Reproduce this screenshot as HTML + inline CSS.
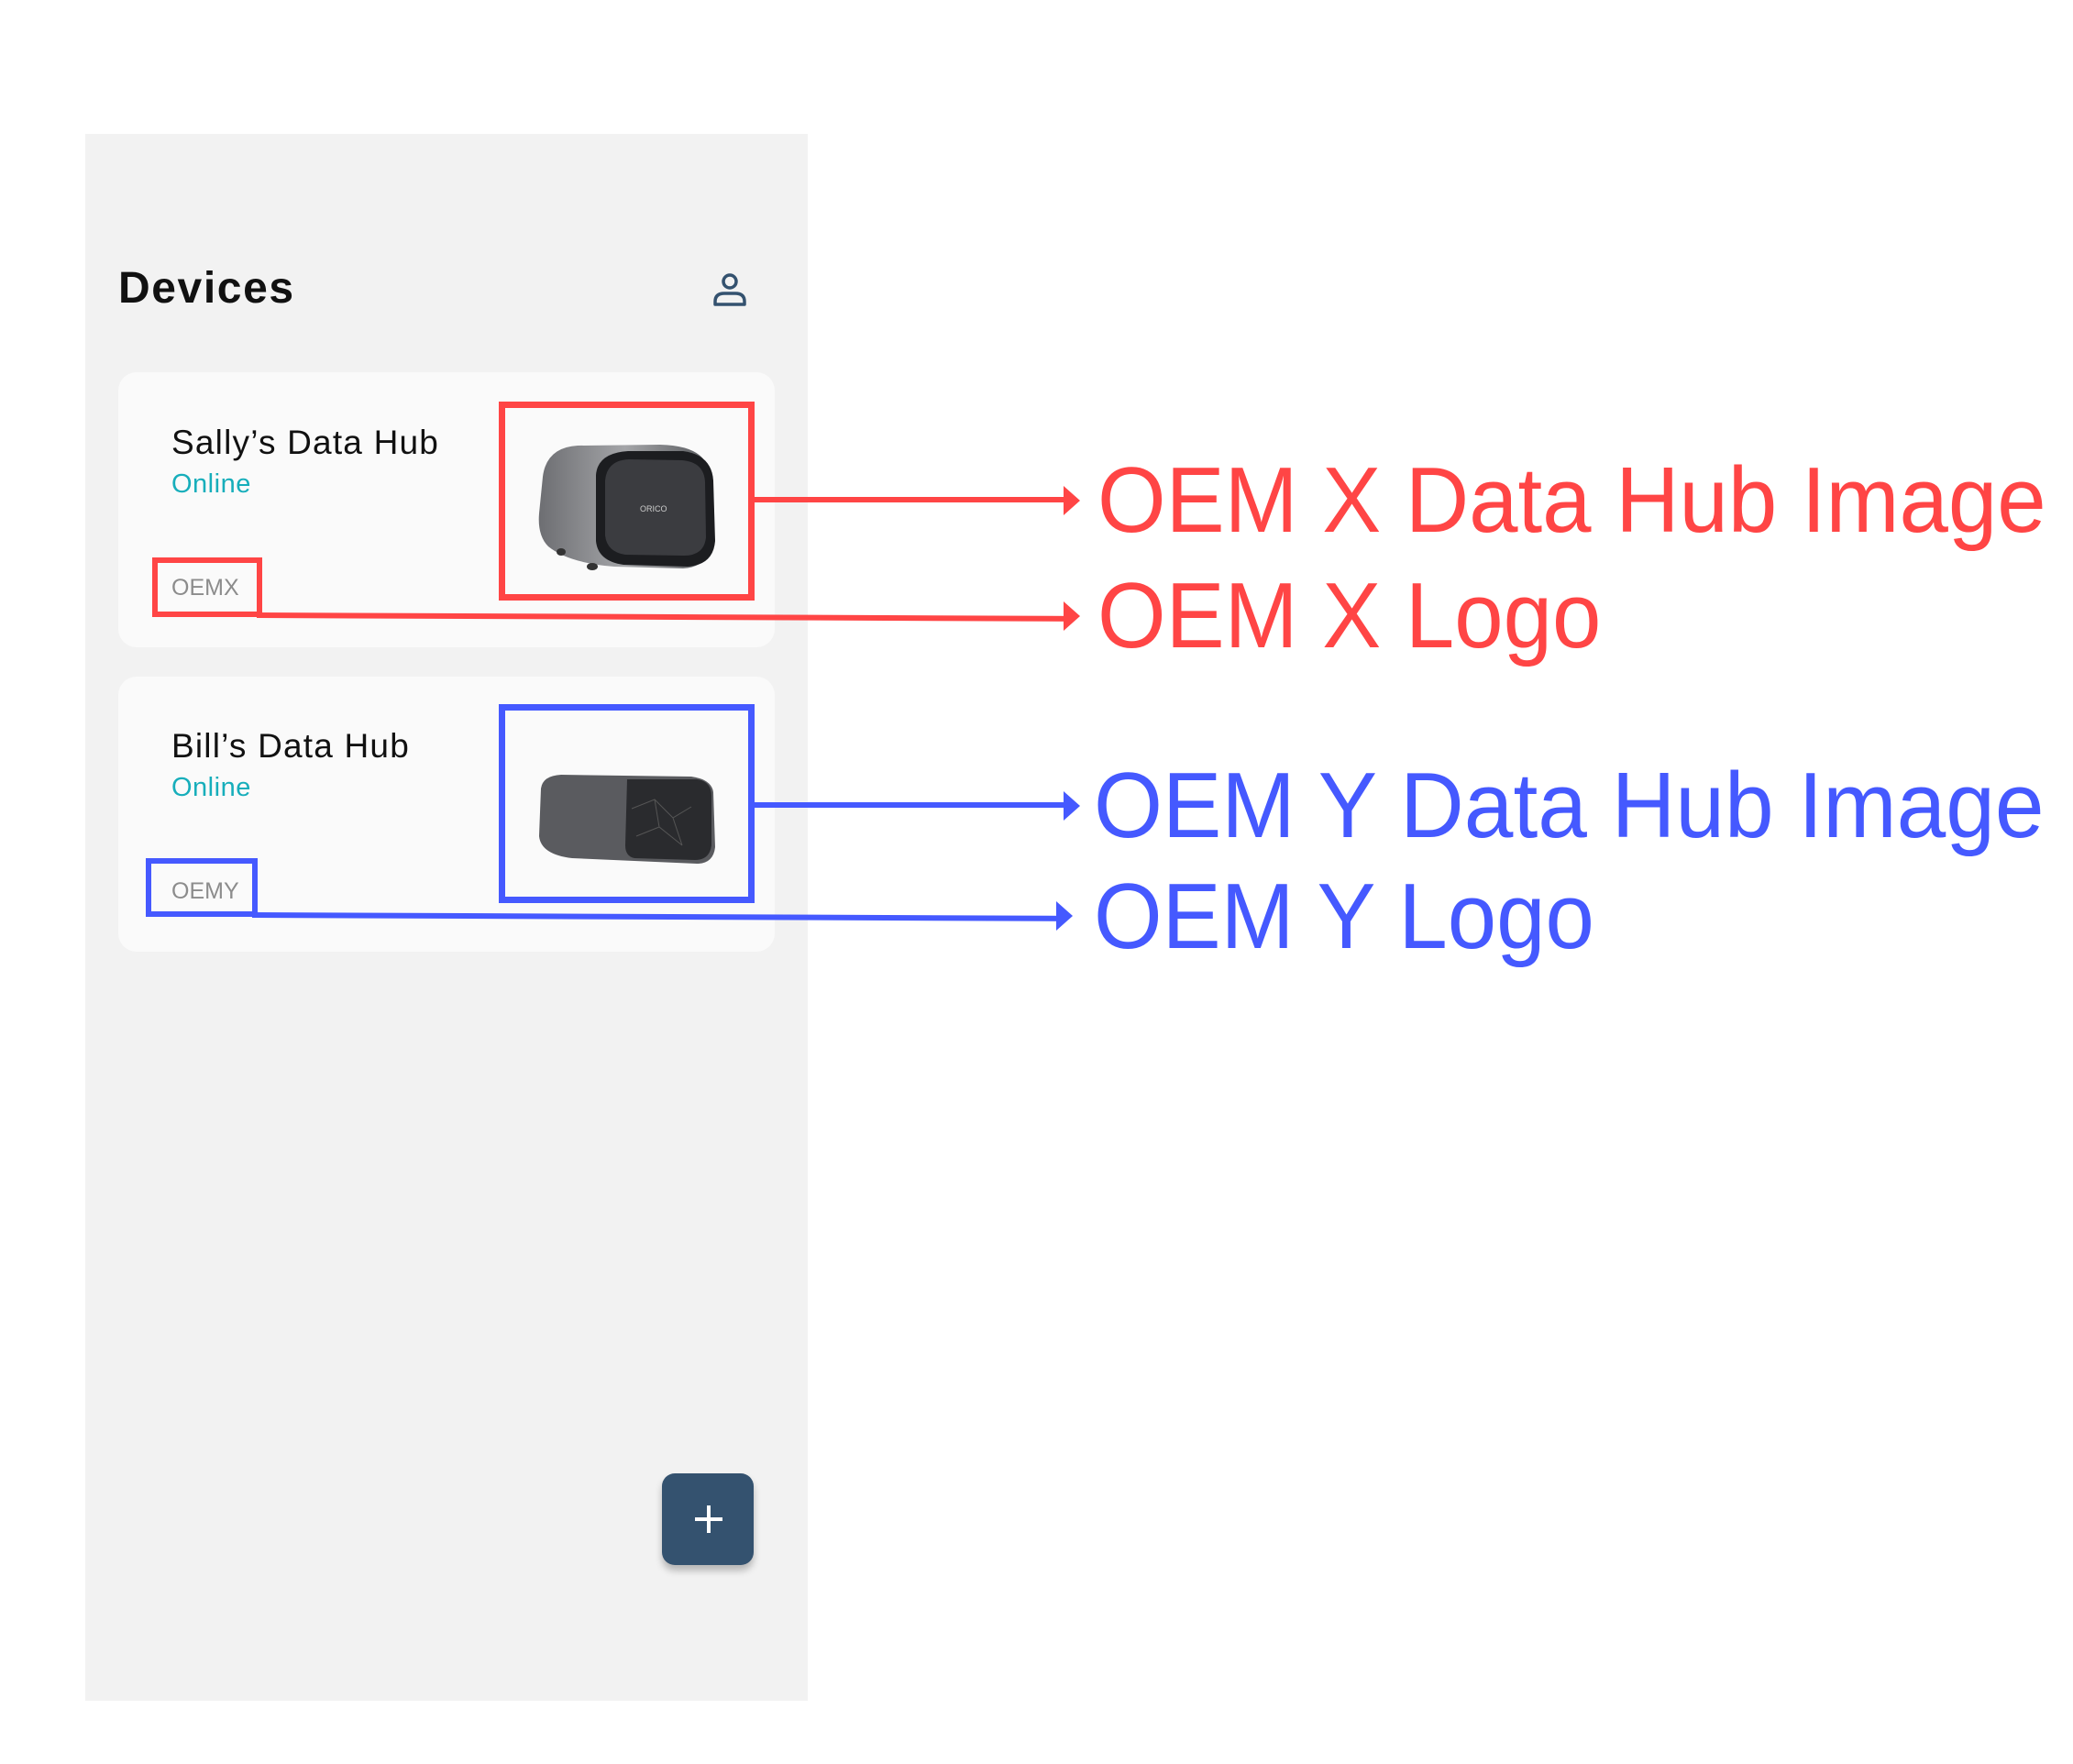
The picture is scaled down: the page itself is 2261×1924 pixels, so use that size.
<!DOCTYPE html>
<html><head><meta charset="utf-8"><style>
html,body{margin:0;padding:0;background:#fff;width:2261px;height:1924px;overflow:hidden;position:relative;font-family:"Liberation Sans",sans-serif}
.a{position:absolute}
.panel{left:93px;top:146px;width:788px;height:1709px;background:#f2f2f2}
.card{left:129px;width:716px;height:300px;background:#fafafa;border-radius:20px}
.t{white-space:nowrap;line-height:1}
.name{font-size:37px;color:#111;letter-spacing:1.2px}
.on{font-size:29px;color:#17aebb;letter-spacing:0.5px}
.oem{font-size:25px;color:#8c8c8c;letter-spacing:0px}
.big{font-size:101px;transform-origin:0 0;transform:scaleX(0.95)}
.r{color:#ff4545}.b{color:#4559ff}
</style></head><body>
<div class="a panel"></div>
<div class="a t" style="left:129px;top:291px;font-size:48px;font-weight:bold;color:#111;letter-spacing:1.6px">Devices</div>
<svg class="a" style="left:776px;top:296px" width="40" height="40" viewBox="0 0 40 40"><circle cx="20" cy="11" r="7" fill="none" stroke="#34526f" stroke-width="3.5"/><path d="M4 36 V33 Q4 24 14 24 H26 Q36 24 36 33 V36 Z" fill="none" stroke="#34526f" stroke-width="3.5" stroke-linejoin="round"/></svg>

<div class="a card" style="top:406px"></div>
<div class="a t name" style="left:187px;top:464px">Sally’s Data Hub</div>
<div class="a t on" style="left:187px;top:514px">Online</div>
<div class="a t oem" style="left:187px;top:629px">OEMX</div>
<svg class="a" style="left:580px;top:480px" width="210" height="150" viewBox="0 0 210 150">
<defs><linearGradient id="g1" x1="0" x2="1"><stop offset="0" stop-color="#6d6e72"/><stop offset=".5" stop-color="#a4a5a8"/><stop offset="1" stop-color="#55575b"/></linearGradient></defs>
<path d="M12 40 Q16 8 50 6 L140 5 Q180 6 190 25 L196 110 Q194 138 165 140 L90 138 Q40 134 18 116 Q6 104 8 80 Z" fill="url(#g1)"/>
<path d="M70 38 Q72 14 105 12 L165 12 Q196 16 198 44 L200 110 Q198 136 170 138 L100 136 Q72 132 70 110 Z" fill="#1c1d20"/>
<path d="M80 44 Q82 22 106 21 L164 22 Q188 24 189 46 L190 106 Q188 126 166 126 L102 125 Q82 122 80 104 Z" fill="#3b3c40"/>
<text x="118" y="78" font-size="9" fill="#ccc" font-family="Liberation Sans">ORICO</text>
<ellipse cx="32" cy="122" rx="5" ry="4" fill="#333"/><ellipse cx="66" cy="138" rx="6" ry="4" fill="#333"/>
</svg>
<div class="a" style="left:544px;top:438px;width:265px;height:203px;border:7px solid #ff4545"></div>
<div class="a" style="left:166px;top:608px;width:108px;height:53px;border:6px solid #ff4545"></div>
<div class="a" style="left:823px;top:542px;width:345px;height:6px;background:#ff4545"></div>
<svg class="a" style="left:1160px;top:530px" width="20" height="32"><path d="M0 0 L18 16 L0 32Z" fill="#ff4545"/></svg>
<div class="a" style="left:280px;top:668px;width:888px;height:6px;background:#ff4545;transform:rotate(0.25deg);transform-origin:0 0"></div>
<svg class="a" style="left:1160px;top:656px" width="20" height="32"><path d="M0 0 L18 16 L0 32Z" fill="#ff4545"/></svg>

<div class="a card" style="top:738px"></div>
<div class="a t name" style="left:187px;top:795px">Bill’s Data Hub</div>
<div class="a t on" style="left:187px;top:845px">Online</div>
<div class="a t oem" style="left:187px;top:960px">OEMY</div>
<svg class="a" style="left:584px;top:842px" width="200" height="104" viewBox="0 0 200 104">
<path d="M6 18 Q8 4 28 3 L170 5 Q192 8 194 22 L196 82 Q194 100 176 100 L40 94 Q6 90 4 70 Z" fill="#5a5b5f"/>
<path d="M100 8 L176 8 Q192 10 192 26 L192 80 Q190 96 174 96 L108 94 Q98 92 98 80 Z" fill="#2a2b2e"/>
<path d="M105 40 L130 30 L150 50 L170 38 M110 70 L135 60 L160 80 M130 30 L135 60 M150 50 L160 80" stroke="#555" fill="none"/>
</svg>
<div class="a" style="left:544px;top:768px;width:265px;height:203px;border:7px solid #4559ff"></div>
<div class="a" style="left:159px;top:936px;width:110px;height:52px;border:6px solid #4559ff"></div>
<div class="a" style="left:823px;top:875px;width:345px;height:6px;background:#4559ff"></div>
<svg class="a" style="left:1160px;top:863px" width="20" height="32"><path d="M0 0 L18 16 L0 32Z" fill="#4559ff"/></svg>
<div class="a" style="left:275px;top:995px;width:885px;height:6px;background:#4559ff;transform:rotate(0.25deg);transform-origin:0 0"></div>
<svg class="a" style="left:1152px;top:983px" width="20" height="32"><path d="M0 0 L18 16 L0 32Z" fill="#4559ff"/></svg>

<div class="a t big r" style="left:1197px;top:496px">OEM X Data Hub Image</div>
<div class="a t big r" style="left:1197px;top:622px">OEM X Logo</div>
<div class="a t big b" style="left:1193px;top:829px;transform:scaleX(0.955)">OEM Y Data Hub Image</div>
<div class="a t big b" style="left:1193px;top:950px">OEM Y Logo</div>

<div class="a" style="left:722px;top:1607px;width:100px;height:100px;background:#34526f;border-radius:14px;box-shadow:0 6px 8px rgba(0,0,0,.25)"></div>
<div class="a" style="left:758px;top:1655px;width:30px;height:4px;background:#fff"></div>
<div class="a" style="left:771px;top:1642px;width:4px;height:30px;background:#fff"></div>
</body></html>
